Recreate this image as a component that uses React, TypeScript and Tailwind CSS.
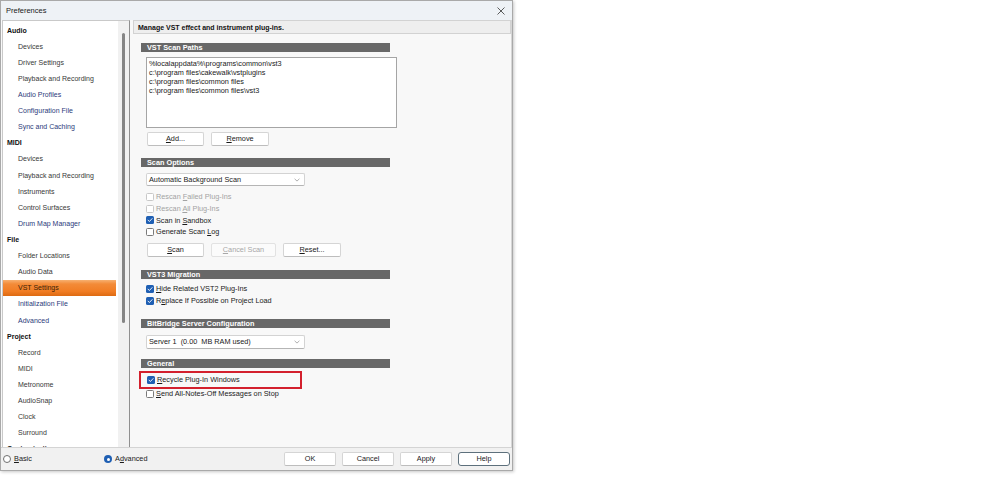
import React from "react";

const FONT = { fontFamily: '"Liberation Sans", Arial, sans-serif' };

type TreeItem = { label: string; header?: boolean; blue?: boolean; selected?: boolean };

const tree: TreeItem[] = [
  { label: "Audio", header: true },
  { label: "Devices" },
  { label: "Driver Settings" },
  { label: "Playback and Recording" },
  { label: "Audio Profiles", blue: true },
  { label: "Configuration File", blue: true },
  { label: "Sync and Caching", blue: true },
  { label: "MIDI", header: true },
  { label: "Devices" },
  { label: "Playback and Recording" },
  { label: "Instruments" },
  { label: "Control Surfaces" },
  { label: "Drum Map Manager", blue: true },
  { label: "File", header: true },
  { label: "Folder Locations" },
  { label: "Audio Data" },
  { label: "VST Settings", selected: true },
  { label: "Initialization File", blue: true },
  { label: "Advanced", blue: true },
  { label: "Project", header: true },
  { label: "Record" },
  { label: "MIDI" },
  { label: "Metronome" },
  { label: "AudioSnap" },
  { label: "Clock" },
  { label: "Surround" },
  { label: "Customization", header: true },
];

function U({ children }: { children: React.ReactNode }) {
  return <span className="underline decoration-[0.7px] underline-offset-[1px]">{children}</span>;
}

function CheckBox({ checked, disabled }: { checked?: boolean; disabled?: boolean }) {
  if (checked) {
    return (
      <span className="w-[8px] h-[8px] rounded-[1.5px] bg-[#1f5fb3] flex items-center justify-center shrink-0">
        <svg width="8" height="8" viewBox="0 0 8 8">
          <path d="M2 4.1 L3.4 5.5 L6.1 2.6" fill="none" stroke="#ffffff" strokeWidth="0.9" strokeLinecap="round" strokeLinejoin="round" />
        </svg>
      </span>
    );
  }
  return (
    <span
      className={
        "w-[8px] h-[8px] rounded-[1.5px] bg-white border shrink-0 " +
        (disabled ? "border-[#c8c8c8]" : "border-[#7a7a7a]")
      }
    />
  );
}

function CheckRow({
  checked,
  disabled,
  children,
  h,
}: {
  checked?: boolean;
  disabled?: boolean;
  children: React.ReactNode;
  h: string;
}) {
  return (
    <div className={"flex items-center ml-[5px] gap-[2px] " + h}>
      <CheckBox checked={checked} disabled={disabled} />
      <span className={"text-[7.3px] leading-none whitespace-nowrap " + (disabled ? "text-[#a3a3a3]" : "text-[#1a1a1a]")}>
        {children}
      </span>
    </div>
  );
}

function SectionBar({ title, mt }: { title: string; mt: string }) {
  return (
    <div className={"w-[249px] h-[9px] bg-[#686868] flex items-center pl-[6px] " + mt}>
      <span className="text-white font-bold text-[7.3px] leading-none whitespace-nowrap">{title}</span>
    </div>
  );
}

function Btn({
  children,
  w,
  disabled,
}: {
  children: React.ReactNode;
  w: string;
  disabled?: boolean;
}) {
  return (
    <div
      className={
        "h-[14px] rounded-[2px] border flex items-center justify-center text-[7.3px] leading-none " +
        w +
        (disabled
          ? " bg-[#fbfbfb] border-[#e2e2e2] text-[#a8a8a8]"
          : " bg-white border-[#d5d5d5] border-b-[#bdbdbd] text-[#1a1a1a]")
      }
    >
      {children}
    </div>
  );
}

function Dropdown({ text, h }: { text: string; h: string }) {
  return (
    <div
      className={
        "ml-[5px] w-[159px] bg-white border border-[#d3d3d3] border-b-[#b5b5b5] rounded-[2px] flex items-center justify-between pl-[2px] pr-[4px] " +
        h
      }
    >
      <span className="text-[7.3px] leading-none text-[#1a1a1a] whitespace-pre">{text}</span>
      <svg width="6" height="4" viewBox="0 0 6 4">
        <path d="M0.6 0.8 L3 3.1 L5.4 0.8" fill="none" stroke="#9a9a9a" strokeWidth="0.8" />
      </svg>
    </div>
  );
}

function Radio({ checked }: { checked?: boolean }) {
  if (checked) {
    return (
      <span className="w-[8px] h-[8px] rounded-full bg-[#1f5fb3] flex items-center justify-center shrink-0">
        <span className="w-[3px] h-[3px] rounded-full bg-white" />
      </span>
    );
  }
  return <span className="w-[8px] h-[8px] rounded-full bg-white border border-[#6f6f6f] shrink-0" />;
}

export default function App() {
  return (
    <div className="w-[1000px] h-[494px] bg-white" style={FONT}>
      <div className="w-[513px] h-[471px] border border-[#a9a9a9] bg-[#f8f8f8] flex flex-col shadow-[1px_1px_3px_rgba(0,0,0,0.22)]">
        {/* Title bar */}
        <div className="h-[19px] bg-[#eef2f6] flex items-center justify-between pl-[5px] pr-[6px]">
          <span className="text-[7.5px] leading-none text-[#1a1a1a]">Preferences</span>
          <svg width="8" height="8" viewBox="0 0 8 8" className="mr-[1px]">
            <path d="M0.5 0.5 L7.5 7.5 M7.5 0.5 L0.5 7.5" stroke="#333" strokeWidth="0.8" />
          </svg>
        </div>

        {/* Body */}
        <div className="h-[427px] flex">
          {/* Left panel */}
          <div className="ml-[1px] w-[128px] h-full bg-white border-l border-t border-r border-l-[#c9c9c9] border-t-[#c9c9c9] border-r-[#8f8f8f] flex">
            <div className="w-[115px] h-full overflow-hidden pt-[1px]">
              {tree.map((it, i) => {
                if (it.selected) {
                  return (
                    <div
                      key={i}
                      className="h-[16.12px] mr-[2px] flex items-center pl-[15px] bg-[linear-gradient(to_bottom,#f7b070_0%,#f38b38_25%,#f17d24_70%,#dd6a12_100%)]"
                    >
                      <span className="text-[7px] leading-none text-[#3a2208]">{it.label}</span>
                    </div>
                  );
                }
                return (
                  <div
                    key={i}
                    className={"h-[16.12px] flex items-center " + (it.header ? "pl-[4px]" : "pl-[15px]")}
                  >
                    <span
                      className={
                        "text-[7px] leading-none whitespace-nowrap " +
                        (it.header ? "font-bold text-[#111]" : it.blue ? "text-[#2c3b7a]" : "text-[#383838]")
                      }
                    >
                      {it.label}
                    </span>
                  </div>
                );
              })}
            </div>
            <div className="w-[11px] h-full bg-[#f1f1f1] pt-[12px]">
              <div className="ml-[4px] w-[3px] h-[290px] rounded-full bg-[#858585]" />
            </div>
          </div>

          {/* Right panel */}
          <div className="ml-[3px] flex-1 h-full border-r border-[#d6d6d6] flex flex-col">
            <div className="h-[14px] bg-[#eeeeee] border border-[#d2d2d2] flex items-center pl-[4px]">
              <span className="text-[7px] font-bold leading-none text-[#111] whitespace-nowrap">
                Manage VST effect and instrument plug-ins.
              </span>
            </div>
            <div className="flex-1 pl-[8px] flex flex-col">
              <SectionBar title="VST Scan Paths" mt="mt-[9px]" />
              <div className="mt-[5px] ml-[5px] w-[251px] h-[71px] bg-white border border-[#a5a5a5] pl-[2px] pt-[1px] text-[7.3px] leading-[9px] text-[#1a1a1a]">
                <div>%localappdata%\programs\common\vst3</div>
                <div>c:\program files\cakewalk\vstplugins</div>
                <div>c:\program files\common files</div>
                <div>c:\program files\common files\vst3</div>
              </div>
              <div className="mt-[4px] ml-[6px] flex gap-[7px]">
                <Btn w="w-[57px]">
                  <U>A</U>dd...
                </Btn>
                <Btn w="w-[58px]">
                  <U>R</U>emove
                </Btn>
              </div>

              <SectionBar title="Scan Options" mt="mt-[12px]" />
              <div className="mt-[6px]">
                <Dropdown text="Automatic Background Scan" h="h-[13px]" />
              </div>
              <div className="mt-[5px] flex flex-col">
                <CheckRow disabled h="h-[11.7px]">
                  Rescan <U>F</U>ailed Plug-Ins
                </CheckRow>
                <CheckRow disabled h="h-[11.7px]">
                  Rescan <U>A</U>ll Plug-Ins
                </CheckRow>
                <CheckRow checked h="h-[11.7px]">
                  Scan in <U>S</U>andbox
                </CheckRow>
                <CheckRow h="h-[11.7px]">
                  Generate Scan <U>L</U>og
                </CheckRow>
              </div>
              <div className="mt-[5px] ml-[6px] flex gap-[7px]">
                <Btn w="w-[57px]">
                  <U>S</U>can
                </Btn>
                <Btn w="w-[65px]" disabled>
                  <U>C</U>ancel Scan
                </Btn>
                <Btn w="w-[58px]">
                  <U>R</U>eset...
                </Btn>
              </div>

              <SectionBar title="VST3 Migration" mt="mt-[13px]" />
              <div className="mt-[4px] flex flex-col">
                <CheckRow checked h="h-[12px]">
                  <U>H</U>ide Related VST2 Plug-Ins
                </CheckRow>
                <CheckRow checked h="h-[12px]">
                  R<U>e</U>place If Possible on Project Load
                </CheckRow>
              </div>

              <SectionBar title="BitBridge Server Configuration" mt="mt-[12px]" />
              <div className="mt-[7px]">
                <Dropdown text="Server 1  (0.00  MB RAM used)" h="h-[14px]" />
              </div>

              <SectionBar title="General" mt="mt-[10px]" />
              <div className="mt-[3px] ml-[-2px] w-[163px] h-[18px] border-2 border-[#d3202d] flex items-center">
                <div className="flex items-center gap-[2px] ml-[6px]">
                  <CheckBox checked />
                  <span className="text-[7.3px] leading-none text-[#1a1a1a] whitespace-nowrap">
                    <U>R</U>ecycle Plug-In Windows
                  </span>
                </div>
              </div>
              <CheckRow h="h-[10px]">
                <U>S</U>end All-Notes-Off Messages on Stop
              </CheckRow>
            </div>
          </div>
        </div>

        {/* Bottom bar */}
        <div className="h-[23px] bg-[#f1f1f1] border-t border-[#d4d4d4] flex items-center">
          <div className="ml-[2px] w-[101px] flex items-center gap-[3px]">
            <Radio />
            <span className="text-[7.3px] leading-none text-[#1a1a1a]">
              <U>B</U>asic
            </span>
          </div>
          <div className="flex items-center gap-[3px]">
            <Radio checked />
            <span className="text-[7.3px] leading-none text-[#1a1a1a]">
              A<U>d</U>vanced
            </span>
          </div>
          <div className="ml-auto mr-[2px] flex gap-[6px]">
            <Btn w="w-[52px]">OK</Btn>
            <Btn w="w-[52px]">Cancel</Btn>
            <Btn w="w-[52px]">Apply</Btn>
            <div className="w-[52px] h-[14px] rounded-[3px] border-[1.5px] border-[#5d707c] bg-white flex items-center justify-center text-[7.3px] leading-none text-[#1a1a1a]">
              Help
            </div>
          </div>
        </div>
      </div>
    </div>
  );
}
